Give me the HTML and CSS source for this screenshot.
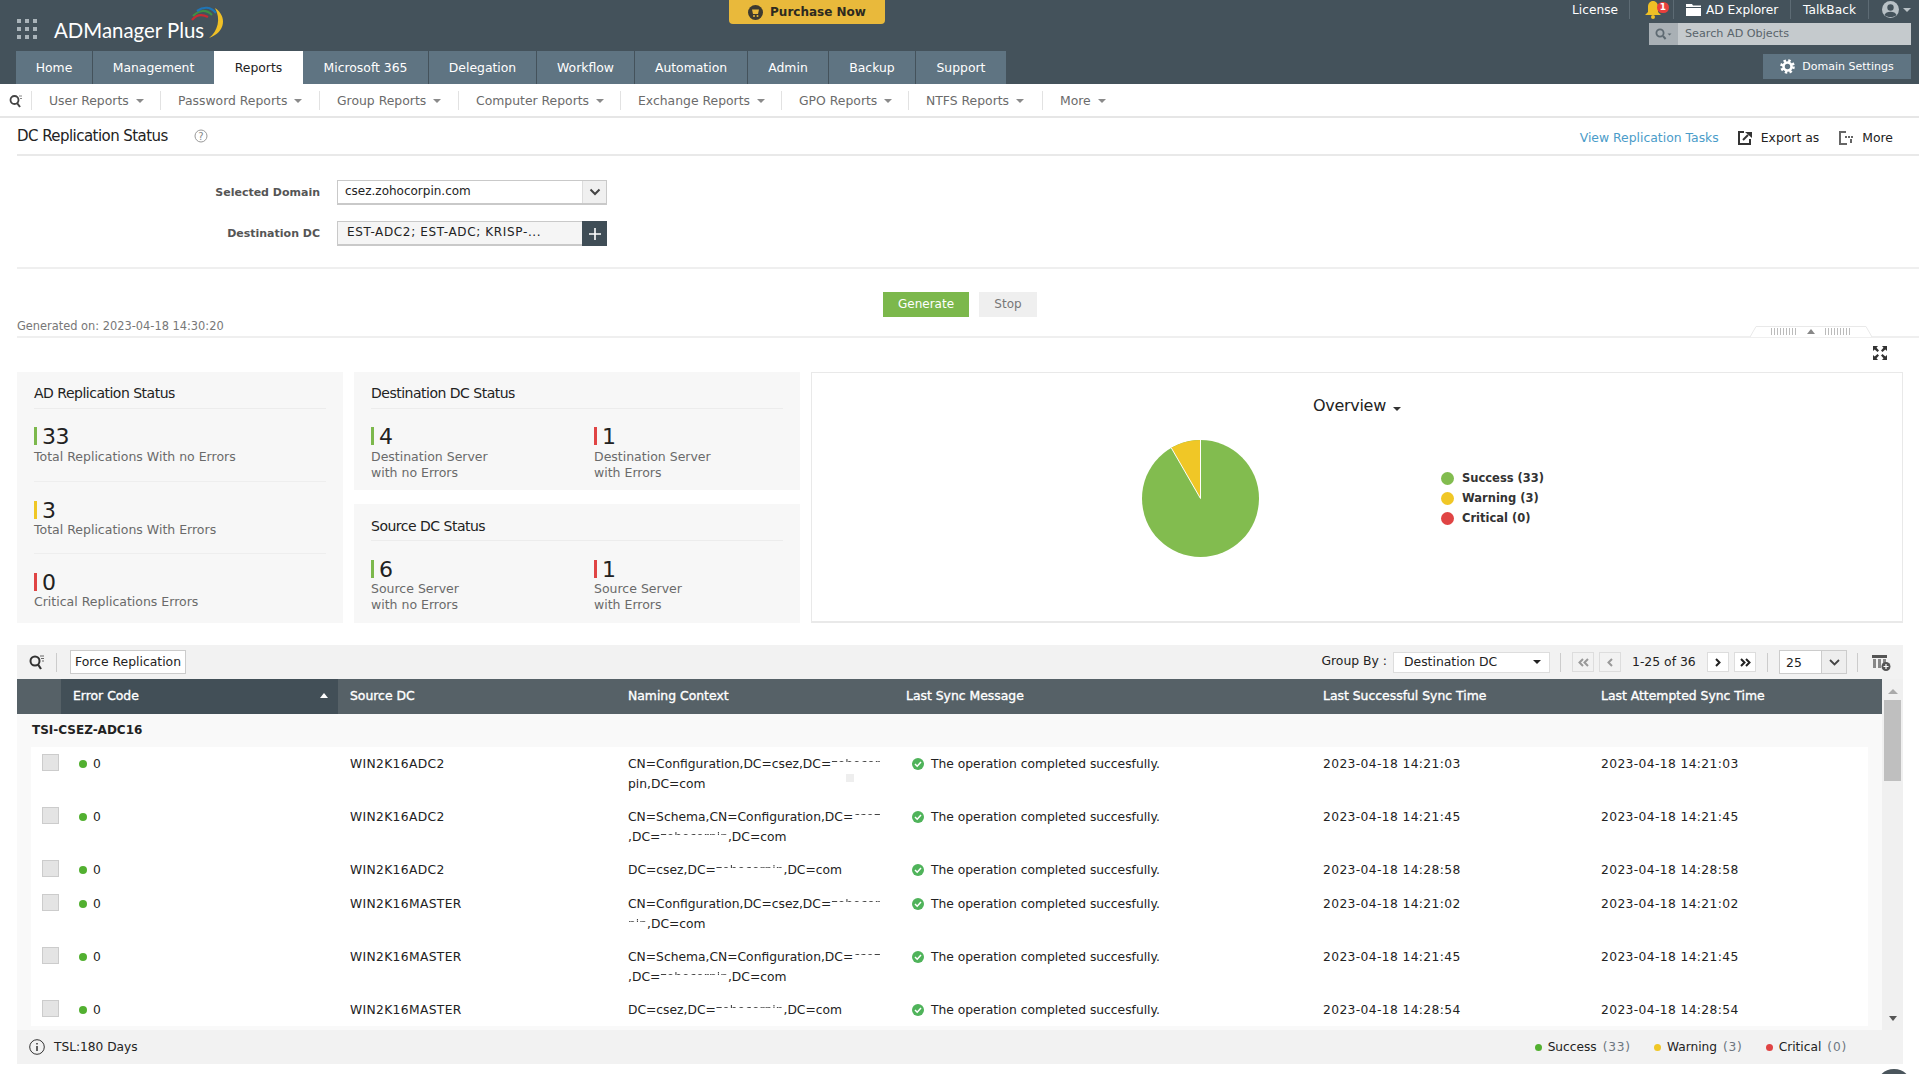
FILE: index.html
```html
<!DOCTYPE html>
<html lang="en">
<head>
<meta charset="utf-8">
<title>DC Replication Status - ADManager Plus</title>
<link rel="stylesheet" href="styles.css">
</head>
<body>
<header class="hdr">
  <div class="hdr-top">
    <div class="brand">
      <svg class="apps" width="20" height="20" viewBox="0 0 20 20"><g fill="#aab4ba"><rect x="0" y="0" width="4" height="4"/><rect x="8" y="0" width="4" height="4"/><rect x="16" y="0" width="4" height="4"/><rect x="0" y="8" width="4" height="4"/><rect x="8" y="8" width="4" height="4"/><rect x="16" y="8" width="4" height="4"/><rect x="0" y="16" width="4" height="4"/><rect x="8" y="16" width="4" height="4"/><rect x="16" y="16" width="4" height="4"/></g></svg>
      <span class="logo-text">ADManager Plus</span>
      <svg class="logo-arc" width="36" height="36" viewBox="0 0 36 36" fill="none"><path d="M1 15C5 10 11 9 17 12" stroke="#c62b33" stroke-width="2.200"/><path d="M2 11C8 5 15 4 21 10" stroke="#3f8f45" stroke-width="2.200"/><path d="M6 6C13 1 20 2 25 8" stroke="#1f74b5" stroke-width="2.200"/><path d="M24 3C36 11 35 27 18 33C27 26 30 14 24 3Z" fill="#f0c026"/></svg>
    </div>
    <a class="purchase"><svg width="15" height="15" viewBox="0 0 15 15"><circle cx="7.500" cy="7.500" r="7.500" fill="#3d3a30"/><path d="M4 4.500h7l-1 4.500H5z" fill="#e9b93b"/><circle cx="6" cy="11" r="1" fill="#e9b93b"/><circle cx="9.500" cy="11" r="1" fill="#e9b93b"/></svg>Purchase Now</a>
    <div class="hdr-right">
      <div class="toplinks">
        <span class="tl tl-license">License</span>
        <span class="tl tl-bell"><svg width="16" height="18" viewBox="0 0 16 18"><path d="M8 0c3 0 5 2.500 5 6v5l3 3H0l3-3V6c0-3.500 2-6 5-6z" fill="#f0c026"/><circle cx="8" cy="16" r="2" fill="#f0c026"/></svg><span class="badge">1</span></span>
        <span class="tl tl-ad"><svg width="15" height="12" viewBox="0 0 15 12"><path d="M0 0h6l1 1.500h8V3H0zM0 4h15v8H0z" fill="#fff"/></svg>AD Explorer</span>
        <span class="tl tl-talk">TalkBack</span>
        <span class="tl tl-user"><svg width="17" height="17" viewBox="0 0 17 17"><circle cx="8.500" cy="8.500" r="8.500" fill="#b9c1c6"/><circle cx="8.500" cy="6.500" r="3.200" fill="#44525b"/><path d="M2.500 14c1-4.500 11-4.500 12 0-3 2.800-9 2.800-12 0z" fill="#44525b"/></svg><i class="tri tri-grey"></i></span>
      </div>
      <div class="hsearch">
        <span class="hsearch-ico"><svg width="18" height="12" viewBox="0 0 18 12" fill="none"><circle cx="5" cy="5" r="3.600" stroke="#5e6a72" stroke-width="1.800"/><path d="M8 8l2.600 3" stroke="#5e6a72" stroke-width="2"/><path d="M12.500 5.500h4l-2 2z" fill="#5e6a72"/></svg></span>
        <span class="hsearch-text">Search AD Objects</span>
      </div>
    </div>
  </div>
  <div class="hdr-nav">
    <nav class="tabs">
      <a class="tab w-home">Home</a><a class="tab w-mgmt">Management</a><a class="tab tab-on w-rep">Reports</a><a class="tab w-ms">Microsoft 365</a><a class="tab w-del">Delegation</a><a class="tab w-wf">Workflow</a><a class="tab w-auto">Automation</a><a class="tab w-adm">Admin</a><a class="tab w-bak">Backup</a><a class="tab w-sup">Support</a>
    </nav>
    <a class="domset"><svg width="15" height="15" viewBox="0 0 15 15" fill="none"><circle cx="7.500" cy="7.500" r="5.700" stroke="#fff" stroke-width="3.200" stroke-dasharray="2.300 2.180"/><circle cx="7.500" cy="7.500" r="4" stroke="#fff" stroke-width="2.600"/></svg>Domain Settings</a>
  </div>
</header>

<div class="subnav">
  <span class="sn-search"><svg width="14" height="14" viewBox="0 0 14 14" fill="none"><circle cx="5.500" cy="6" r="4" stroke="#444" stroke-width="1.800"/><path d="M8 9l3 4" stroke="#444" stroke-width="2"/><path d="M10 2h3M11 4.500h2" stroke="#888"/></svg></span>
  <a class="sn sn1">User Reports<i class="tri"></i></a>
  <a class="sn sn2">Password Reports<i class="tri"></i></a>
  <a class="sn sn3">Group Reports<i class="tri"></i></a>
  <a class="sn sn4">Computer Reports<i class="tri"></i></a>
  <a class="sn sn5">Exchange Reports<i class="tri"></i></a>
  <a class="sn sn6">GPO Reports<i class="tri"></i></a>
  <a class="sn sn7">NTFS Reports<i class="tri"></i></a>
  <a class="sn sn8">More<i class="tri"></i></a>
</div>

<main class="page">
  <div class="titlebar">
    <h1 class="title">DC Replication Status</h1>
    <svg class="help" width="14" height="14" viewBox="0 0 14 14"><circle cx="7" cy="7" r="6" fill="none" stroke="#999"/><text x="7" y="10.500" text-anchor="middle" class="help-q">?</text></svg>
    <a class="viewtasks">View Replication Tasks</a>
    <a class="act act-exp"><svg width="14" height="15" viewBox="0 0 14 15" fill="none"><path d="M6 2H1v12h11V9" stroke="#333" stroke-width="2"/><path d="M5 10l5-5" stroke="#333" stroke-width="2"/><path d="M7 2h7v6z" fill="#333"/></svg>Export as</a>
    <a class="act act-more"><svg width="14" height="15" viewBox="0 0 14 15" fill="none"><path d="M7 2H1v12h7" stroke="#666" stroke-width="2"/><path d="M6 7h2M9 7h2M12 7h2M12 9v4" stroke="#333" stroke-width="1.500"/></svg>More</a>
  </div>

  <form class="filters">
    <div class="frow">
      <label class="flabel">Selected Domain</label>
      <div class="fctl"><span class="fval">csez.zohocorpin.com</span><span class="fbtn"><svg width="12" height="8" viewBox="0 0 12 8" fill="none"><path d="M1.500 1.500L6 6l4.500-4.500" stroke="#444" stroke-width="2"/></svg></span></div>
    </div>
    <div class="frow frow2">
      <label class="flabel">Destination DC</label>
      <div class="fctl fctl-grey"><span class="fval fval2">EST-ADC2; EST-ADC; KRISP-...</span><span class="fbtn fbtn-dark"><svg width="12" height="12" viewBox="0 0 12 12"><path d="M6 0v12M0 6h12" stroke="#fff" stroke-width="1.600"/></svg></span></div>
    </div>
  </form>

  <div class="actions">
    <a class="btn btn-go">Generate</a>
    <a class="btn btn-stop">Stop</a>
  </div>

  <div class="genline">
    <span class="gen">Generated on: 2023-04-18 14:30:20</span>
    <span class="collapse"><svg class="collapse-bg" width="122" height="11" viewBox="0 0 122 11" fill="#fff"><path d="M0 11L6 .5H116L122 11" stroke="#e9e9e9"/></svg><i class="dots"></i><i class="tri-up"></i><i class="dots"></i></span>
  </div>

  <div class="expand-row"><svg width="14" height="14" viewBox="0 0 14 14"><path d="M0 0h5L3.500 1.700 6 4.500 4.500 6 1.700 3.500 0 5zM14 0v5l-1.700-1.500L9.500 6 8 4.500l2.500-2.800L9 0zM0 14V9l1.700 1.500L4.500 8 6 9.500l-2.500 2.800L5 14zM14 14H9l1.500-1.700L8 9.500 9.500 8l2.800 2.500L14 9z" fill="#333"/></svg></div>

  <section class="stats">
    <div class="card card-ad">
      <h2 class="card-h">AD Replication Status</h2>
      <div class="stat stat-block"><div class="num"><i class="bar g"></i>33</div><div class="cap">Total Replications With no Errors</div></div>
      <div class="stat stat-block ruled"><div class="num"><i class="bar y"></i>3</div><div class="cap">Total Replications With Errors</div></div>
      <div class="stat stat-block ruled"><div class="num"><i class="bar r"></i>0</div><div class="cap">Critical Replications Errors</div></div>
    </div>
    <div class="mid">
      <div class="card card-dc">
        <h2 class="card-h">Destination DC Status</h2>
        <div class="pair">
          <div class="stat"><div class="num"><i class="bar g"></i>4</div><div class="cap">Destination Server<br>with no Errors</div></div>
          <div class="stat"><div class="num"><i class="bar r"></i>1</div><div class="cap">Destination Server<br>with Errors</div></div>
        </div>
      </div>
      <div class="card card-dc card-src">
        <h2 class="card-h">Source DC Status</h2>
        <div class="pair">
          <div class="stat"><div class="num"><i class="bar g"></i>6</div><div class="cap">Source Server<br>with no Errors</div></div>
          <div class="stat"><div class="num"><i class="bar r"></i>1</div><div class="cap">Source Server<br>with Errors</div></div>
        </div>
      </div>
    </div>
    <div class="chart">
      <div class="chart-title">Overview<i class="tri tri-dark"></i></div>
      <div class="chart-body">
        <svg class="pie" width="117" height="117" viewBox="-59 -59 118 118"><circle r="59" fill="#82bc4f"/><path d="M0 0L0-59A59 59 0 0 0-29.500-51.100Z" fill="#f0c726"/><path d="M0 0L0-59M0 0L-29.500-51.100" stroke="#fff" stroke-width="1"/></svg>
        <ul class="legend">
          <li><i class="ldot"></i>Success (33)</li>
          <li><i class="ldot ldot-y"></i>Warning (3)</li>
          <li><i class="ldot ldot-r"></i>Critical (0)</li>
        </ul>
      </div>
    </div>
  </section>

  <section class="gridwrap">
    <div class="toolbar">
      <span class="tb-search"><svg width="16" height="16" viewBox="0 0 16 16" fill="none"><circle cx="6" cy="7" r="4.500" stroke="#333" stroke-width="2"/><path d="M9 10.500l3 4.500" stroke="#333" stroke-width="2.200"/><path d="M11 2h4M12 4.500h3M13 7h2" stroke="#666"/></svg></span>
      <span class="tb-sep"></span>
      <a class="force">Force Replication</a>
      <span class="tb-right">
        <span class="gb-label">Group By :</span>
        <span class="gb-sel"><span>Destination DC</span><i class="tri tri-black"></i></span>
        <span class="tb-sep tb-sep2"></span>
        <a class="pg pg-off"><svg width="11" height="9" viewBox="0 0 11 9" fill="none" stroke="#999" stroke-width="2"><path d="M5 1L1.500 4.500 5 8M10 1L6.500 4.500 10 8"/></svg></a>
        <a class="pg pg-off"><svg width="6" height="9" viewBox="0 0 6 9" fill="none" stroke="#999" stroke-width="2"><path d="M5 1L1.500 4.500 5 8"/></svg></a>
        <span class="pg-text">1-25 of 36</span>
        <a class="pg"><svg width="6" height="9" viewBox="0 0 6 9" fill="none" stroke="#222" stroke-width="2"><path d="M1 1l3.500 3.500L1 8"/></svg></a>
        <a class="pg"><svg width="11" height="9" viewBox="0 0 11 9" fill="none" stroke="#222" stroke-width="2"><path d="M1 1l3.500 3.500L1 8M6 1l3.500 3.500L6 8"/></svg></a>
        <span class="tb-sep tb-sep3"></span>
        <span class="size"><span class="size-v">25</span><span class="size-b"><svg width="11" height="7" viewBox="0 0 11 7" fill="none"><path d="M1 1l4.500 4.500L10 1" stroke="#444" stroke-width="1.800"/></svg></span></span>
        <span class="tb-sep tb-sep4"></span>
        <svg class="colsel" width="19" height="17" viewBox="0 0 19 17"><path d="M0 1h15v3H0z" fill="#555"/><path d="M1 5h3v9H1zM6 5h3v9H6zM11 5h3v6h-3z" fill="#888"/><circle cx="14" cy="12.500" r="4.500" fill="#555"/><path d="M14 10v5M11.500 12.500h5" stroke="#fff" stroke-width="1.200"/></svg>
      </span>
    </div>
    <div class="gridbody">
      <div class="gridmain">
        <div class="thead">
          <span></span>
          <span class="th th-sort">Error Code<i class="tri-up tri-up-w"></i></span>
          <span class="th th-dc">Source DC</span>
          <span class="th">Naming Context</span>
          <span class="th">Last Sync Message</span>
          <span class="th">Last Successful Sync Time</span>
          <span class="th">Last Attempted Sync Time</span>
        </div>
        <div class="group">TSI-CSEZ-ADC16</div>
        <div class="rows">
          <div class="row row-2">
            <span class="cb"></span><span class="code"><i class="okdot"></i>0</span><span class="dc">WIN2K16ADC2</span>
            <span class="nc">CN=Configuration,DC=csez,DC=<b class="red">zohocor</b><br>pin,DC=com<i class="smudge"></i></span>
            <span class="msg"><svg class="ok" width="12" height="12" viewBox="0 0 12 12"><circle cx="6" cy="6" r="6" fill="#4fb35a"/><path d="M3 6l2.200 2.200L9 4" stroke="#fff" stroke-width="1.500" fill="none"/></svg>The operation completed succesfully.</span>
            <span class="ts">2023-04-18 14:21:03</span><span class="ts">2023-04-18 14:21:03</span>
          </div>
          <div class="row row-2">
            <span class="cb"></span><span class="code"><i class="okdot"></i>0</span><span class="dc">WIN2K16ADC2</span>
            <span class="nc">CN=Schema,CN=Configuration,DC=<b class="red">csez</b><br>,DC=<b class="red">zohocorpin</b>,DC=com</span>
            <span class="msg"><svg class="ok" width="12" height="12" viewBox="0 0 12 12"><circle cx="6" cy="6" r="6" fill="#4fb35a"/><path d="M3 6l2.200 2.200L9 4" stroke="#fff" stroke-width="1.500" fill="none"/></svg>The operation completed succesfully.</span>
            <span class="ts">2023-04-18 14:21:45</span><span class="ts">2023-04-18 14:21:45</span>
          </div>
          <div class="row row-1">
            <span class="cb"></span><span class="code"><i class="okdot"></i>0</span><span class="dc">WIN2K16ADC2</span>
            <span class="nc">DC=csez,DC=<b class="red">zohocorpin</b>,DC=com</span>
            <span class="msg"><svg class="ok" width="12" height="12" viewBox="0 0 12 12"><circle cx="6" cy="6" r="6" fill="#4fb35a"/><path d="M3 6l2.200 2.200L9 4" stroke="#fff" stroke-width="1.500" fill="none"/></svg>The operation completed succesfully.</span>
            <span class="ts">2023-04-18 14:28:58</span><span class="ts">2023-04-18 14:28:58</span>
          </div>
          <div class="row row-2">
            <span class="cb"></span><span class="code"><i class="okdot"></i>0</span><span class="dc">WIN2K16MASTER</span>
            <span class="nc">CN=Configuration,DC=csez,DC=<b class="red">zohocor</b><br><b class="red">pin</b>,DC=com</span>
            <span class="msg"><svg class="ok" width="12" height="12" viewBox="0 0 12 12"><circle cx="6" cy="6" r="6" fill="#4fb35a"/><path d="M3 6l2.200 2.200L9 4" stroke="#fff" stroke-width="1.500" fill="none"/></svg>The operation completed succesfully.</span>
            <span class="ts">2023-04-18 14:21:02</span><span class="ts">2023-04-18 14:21:02</span>
          </div>
          <div class="row row-2">
            <span class="cb"></span><span class="code"><i class="okdot"></i>0</span><span class="dc">WIN2K16MASTER</span>
            <span class="nc">CN=Schema,CN=Configuration,DC=<b class="red">csez</b><br>,DC=<b class="red">zohocorpin</b>,DC=com</span>
            <span class="msg"><svg class="ok" width="12" height="12" viewBox="0 0 12 12"><circle cx="6" cy="6" r="6" fill="#4fb35a"/><path d="M3 6l2.200 2.200L9 4" stroke="#fff" stroke-width="1.500" fill="none"/></svg>The operation completed succesfully.</span>
            <span class="ts">2023-04-18 14:21:45</span><span class="ts">2023-04-18 14:21:45</span>
          </div>
          <div class="row row-1">
            <span class="cb"></span><span class="code"><i class="okdot"></i>0</span><span class="dc">WIN2K16MASTER</span>
            <span class="nc">DC=csez,DC=<b class="red">zohocorpin</b>,DC=com</span>
            <span class="msg"><svg class="ok" width="12" height="12" viewBox="0 0 12 12"><circle cx="6" cy="6" r="6" fill="#4fb35a"/><path d="M3 6l2.200 2.200L9 4" stroke="#fff" stroke-width="1.500" fill="none"/></svg>The operation completed succesfully.</span>
            <span class="ts">2023-04-18 14:28:54</span><span class="ts">2023-04-18 14:28:54</span>
          </div>
        </div>
      </div>
      <div class="scroll">
        <i class="sb-up"></i>
        <i class="sb-thumb"></i>
        <i class="sb-down"></i>
      </div>
    </div>
    <div class="gridfoot">
      <svg class="info" width="16" height="16" viewBox="0 0 16 16"><circle cx="8" cy="8" r="7.300" fill="none" stroke="#333"/><path d="M8 7v5M8 4v1.600" stroke="#333" stroke-width="1.500"/></svg>
      <span>TSL:180 Days</span>
      <span class="fleg"><i class="fd fd-g"></i>Success <em>(33)</em></span>
      <span class="fleg fleg2"><i class="fd fd-y"></i>Warning <em>(3)</em></span>
      <span class="fleg fleg3"><i class="fd fd-r"></i>Critical <em>(0)</em></span>
    </div>
  </section>
</main>
<span class="chatbub"></span>
</body>
</html>
```
FILE: styles.css
```css
* { box-sizing: border-box; }
html, body { margin: 0; padding: 0; }
body { width: 1919px; height: 1074px; overflow: hidden; background: #fff; font-family: "DejaVu Sans", Verdana, sans-serif; font-size: 12.400px; color: #222; position: relative; }
a { color: inherit; text-decoration: none; }
i, em { font-style: normal; }

.hdr { height: 84px; background: #44525b; }
.hdr-top { height: 51px; display: flex; align-items: flex-start; }
.brand { width: 729px; height: 51px; display: flex; align-items: flex-start; padding: 19px 0 0 17px; position: relative; }
.logo-text { margin-left: 17px; margin-top: -1px; font-family: Lato, sans-serif; font-size: 20.400px; color: #fff; white-space: nowrap; }
.logo-arc { position: absolute; left: 191px; top: 5px; }
.purchase { width: 156px; height: 24px; background: #e9b93b; border-radius: 0 0 4px 4px; display: flex; align-items: center; justify-content: center; gap: 7px; font-weight: bold; font-size: 12px; color: #2d2a20; }
.hdr-right { margin-left: auto; display: flex; flex-direction: column; align-items: flex-end; padding-right: 8px; }
.toplinks { height: 23px; display: flex; align-items: flex-start; color: #fff; font-size: 12.200px; }
.tl { height: 19px; display: flex; align-items: center; border-right: 1px solid #5d6b74; white-space: nowrap; position: relative; }
.tl-license { padding-right: 11px; }
.tl-bell { width: 44px; padding-left: 15px; }
.tl-ad { width: 117px; padding-left: 12px; gap: 5px; }
.tl-talk { width: 78px; justify-content: center; }
.tl-user { width: 42px; padding-left: 13px; border-right: 0; gap: 4px; }
.badge { position: absolute; left: 27px; top: 2px; width: 12px; height: 11px; border-radius: 6px; background: #e8403d; color: #fff; font-size: 9px; font-weight: bold; line-height: 11px; text-align: center; }
.hsearch { width: 262px; height: 22px; background: #c5cacd; display: flex; }
.hsearch-ico { width: 29px; background: #a9b0b5; display: flex; align-items: center; justify-content: center; }
.hsearch-text { padding-left: 7px; line-height: 22px; font-size: 11.200px; color: #59646b; }

.hdr-nav { height: 33px; display: flex; justify-content: space-between; padding: 0 8px 0 16px; }
.tabs { display: flex; gap: 1px; }
.tab { height: 33px; line-height: 34px; background: #5f7482; color: #fff; text-align: center; white-space: nowrap; }
.tab-on { background: #fff; color: #222; margin: 0 -1px; }
.w-home { width: 76px; } .w-mgmt { width: 121px; } .w-rep { width: 89px; } .w-ms { width: 125px; } .w-del { width: 107px; } .w-wf { width: 97px; } .w-auto { width: 112px; } .w-adm { width: 80px; } .w-bak { width: 86px; } .w-sup { width: 90px; }
.domset { width: 148px; height: 25px; margin-top: 3px; background: #5f7482; color: #fff; font-size: 11px; display: flex; align-items: center; justify-content: center; gap: 7px; white-space: nowrap; }

.subnav { height: 34px; border-bottom: 2px solid #e6e6e6; display: flex; align-items: center; color: #6b6b6b; padding-top: 1px; }
.sn-search { width: 31px; padding-left: 9px; display: flex; }
.sn { height: 19px; border-left: 1px solid #e2e2e2; display: flex; align-items: center; padding-left: 17px; white-space: nowrap; }
.sn1 { width: 129px; } .sn2 { width: 159px; } .sn3 { width: 139px; } .sn4 { width: 162px; } .sn5 { width: 161px; } .sn6 { width: 127px; } .sn7 { width: 134px; } .sn8 { width: 80px; }
.tri { display: inline-block; width: 0; height: 0; margin-left: 7px; border-left: 4px solid transparent; border-right: 4px solid transparent; border-top: 4px solid #8a8a8a; }
.tri-grey { border-top-color: #b9c1c6; margin-left: 0; }
.tri-dark { border-top-color: #333; }
.tri-black { border-top-color: #222; margin-left: auto; }

.titlebar { height: 38px; margin: 0 0 0 17px; border-bottom: 2px solid #e9e9e9; display: flex; align-items: center; padding-right: 26px; }
.title { margin: 0; font-size: 15px; font-weight: normal; color: #222; letter-spacing: -0.55px; }
.help { margin-left: 26px; }
.help-q { font-size: 10px; fill: #888; }
.viewtasks { margin-left: auto; padding-top: 2px; color: #4a9cc9; }
.act { display: flex; align-items: center; gap: 9px; padding-top: 2px; }
.act-exp { margin-left: 19px; }
.act-more { margin-left: 20px; }

.filters { margin-left: 17px; height: 113px; border-bottom: 2px solid #efefef; padding-top: 24px; }
.frow { display: flex; align-items: center; height: 25px; }
.frow2 { margin-top: 16px; }
.flabel { width: 320px; padding-right: 17px; text-align: right; font-weight: bold; font-size: 11px; color: #555; }
.fctl { width: 270px; height: 25px; border: 1px solid #c9c9c9; border-bottom-width: 2px; display: flex; justify-content: space-between; background: #fff; font-size: 12px; }
.fctl-grey { background: #f5f5f5; }
.fval { padding-left: 7px; line-height: 21px; }
.fval2 { padding-left: 9px; letter-spacing: .65px; }
.fbtn { width: 24px; background: #f0f0f0; border-left: 1px solid #ddd; display: flex; align-items: center; justify-content: center; }
.fbtn-dark { background: #3f4d56; margin: -1px -1px -2px 0; width: 25px; border: 0; }

.actions { height: 55px; padding: 23px 0 0 883px; display: flex; gap: 10px; }
.btn { height: 25px; line-height: 25px; text-align: center; font-size: 12px; }
.btn-go { width: 86px; background: #7cb84c; color: #fff; }
.btn-stop { width: 58px; background: #efefef; color: #777; }

.genline { height: 14px; margin-left: 17px; border-bottom: 2px solid #efefef; position: relative; }
.gen { position: absolute; left: 0; top: -5px; font-size: 11.400px; color: #777; }
.collapse { position: absolute; right: 47px; top: 2px; height: 11px; width: 122px; display: flex; align-items: center; justify-content: center; gap: 10px; }
.collapse-bg { position: absolute; left: 0; top: 0; }
.dots { position: relative; width: 26px; height: 7px; background: repeating-linear-gradient(90deg, #bbb 0 1px, transparent 1px 3px); }
.tri-up { position: relative; width: 0; height: 0; border-left: 4px solid transparent; border-right: 4px solid transparent; border-bottom: 5px solid #888; }
.tri-up-w { border-bottom-color: #fff; margin-left: auto; margin-right: 10px; }

.expand-row { height: 34px; padding: 8px 0 0 1873px; }

.stats { display: flex; margin-left: 17px; height: 251px; }
.card { background: #f7f7f7; padding: 0 17px; }
.card-ad { width: 326px; }
.mid { width: 446px; margin-left: 11px; display: flex; flex-direction: column; gap: 14px; }
.card-dc { height: 118px; }
.card-src { height: 119px; }
.card-h { margin: 0; height: 37px; border-bottom: 1px solid #ececec; padding-top: 13px; font-size: 14px; font-weight: normal; letter-spacing: -0.5px; color: #222; white-space: nowrap; }
.card-src .card-h { padding-top: 14px; }
.stat-block { height: 72px; padding-top: 17px; }
.stat-block.ruled { border-top: 1px solid #eee; padding-top: 18px; }
.ruled .cap { margin-top: 2px; }
.pair { display: flex; padding-top: 17px; }
.card-src .pair { padding-top: 18px; }
.card-src .cap { margin-top: 2px; }
.pair .stat { width: 223px; }
.pair .stat + .stat { width: auto; }
.num { display: flex; align-items: center; height: 20px; font-size: 22px; letter-spacing: -0.500px; color: #222; }
.bar { width: 3px; height: 18px; margin-right: 5px; }
.bar.g { background: #7cb84c; } .bar.y { background: #f0c726; } .bar.r { background: #e04444; }
.cap { margin-top: 3px; line-height: 16px; color: #6a6a6a; font-size: 12.500px; white-space: nowrap; }

.chart { margin-left: 11px; width: 1092px; border: 1px solid #e9e9e9; border-bottom-width: 2px; }
.chart-title { padding: 23px 0 0 501px; font-size: 16px; height: 67px; letter-spacing: -0.300px; }
.chart-body { display: flex; }
.pie { margin: 0 0 0 330px; }
.legend { list-style: none; margin: 28px 0 0 0; padding: 0 0 0 182px; font-weight: bold; font-size: 11.500px; color: #333; }
.legend li { height: 20px; display: flex; align-items: center; gap: 8px; }
.ldot { width: 13px; height: 13px; border-radius: 50%; background: #82bc4f; }
.ldot-y { background: #f0c726; } .ldot-r { background: #e04444; }

.gridwrap { margin: 22px 0 0 17px; width: 1886px; }
.toolbar { height: 34px; background: #f2f2f2; display: flex; align-items: center; padding-left: 12px; }
.tb-search { display: flex; }
.tb-sep { width: 1px; height: 19px; background: #ccc; margin: 0 13px 0 11px; }
.force { height: 24px; line-height: 22px; padding: 0 4px; background: #fff; border: 1px solid #ccc; }
.tb-right { margin-left: auto; display: flex; align-items: center; padding-right: 12px; font-size: 12.400px; }
.gb-label { margin-right: 6px; padding-bottom: 3px; }
.gb-sel { width: 157px; height: 21px; background: #fff; border: 1px solid #ddd; display: flex; align-items: center; padding: 0 8px 1px 10px; }
.tb-sep2 { margin: 0 11px 0 10px; }
.tb-sep3 { margin: 0 11px 0 6px; }
.tb-sep4 { margin: 0 14px 0 10px; }
.pg { width: 22px; height: 20px; border: 1px solid #ddd; background: #fff; margin-right: 5px; display: flex; align-items: center; justify-content: center; }
.pg-off { background: #f2f2f2; }
.pg-text { width: 81px; padding: 0 0 2px 6px; white-space: nowrap; }
.size { width: 68px; height: 24px; border: 1px solid #ccc; background: #fff; display: flex; }
.size-v { flex: 1; padding-left: 6px; line-height: 24px; }
.size-b { width: 25px; background: #eee; border-left: 1px solid #ccc; display: flex; align-items: center; justify-content: center; }

.gridbody { height: 351px; display: flex; overflow: hidden; }
.gridmain { width: 1865px; background: #f9f9f9; }
.thead { height: 35px; background: #566167; color: #fff; display: grid; grid-template-columns: 44px 277px 279px 278px 417px 278px 1fr; font-size: 12.400px; -webkit-text-stroke: .35px #fff; }
.th { padding: 0 0 3px 11px; display: flex; align-items: center; white-space: nowrap; }
.th-sort { background: #424f57; padding-left: 12px; }
.th-dc { padding-left: 12px; }
.group { height: 33px; padding-left: 15px; line-height: 33px; font-weight: bold; font-size: 12px; color: #222; }
.rows { margin-left: 14px; width: 1837px; background: #fff; }
.row { display: grid; grid-template-columns: 30px 277px 279px 278px 417px 278px 1fr; padding-top: 7px; line-height: 20px; white-space: nowrap; font-size: 12.300px; }
.row > span { padding-left: 11px; }
.row-2 { height: 53px; }
.row-1 { height: 33.500px; }
.row .cb { display: block; width: 17px; height: 17px; margin: 0 0 0 11px; padding: 0; background: #e4e4e4; border: 1px solid #ccc; }
.row .code { padding-left: 18px; display: flex; align-items: flex-start; }
.okdot { width: 8px; height: 8px; margin: 6px 6px 0 0; border-radius: 50%; background: #52b030; }
.row .dc { padding-left: 12px; letter-spacing: .35px; }
.row .nc { position: relative; }
.smudge { position: absolute; left: 229px; top: 20px; width: 8px; height: 8px; background: #eee; }
.row .msg { padding-left: 17px; display: flex; align-items: flex-start; }
.ok { margin: 4px 7px 0 0; flex: none; }
.row .ts { letter-spacing: .37px; }
.red { font-weight: normal; color: transparent; background: linear-gradient(#444 0 38%, #fff 38% 100%); -webkit-background-clip: text; background-clip: text; }

.scroll { width: 21px; background: #f0f0f0; display: flex; flex-direction: column; align-items: center; }
.sb-up { margin-top: 10px; width: 0; height: 0; border-left: 5px solid transparent; border-right: 5px solid transparent; border-bottom: 5px solid #aaa; }
.sb-thumb { margin-top: 6px; width: 17px; height: 81px; background: #bfbfbf; }
.sb-down { margin-top: auto; margin-bottom: 9px; width: 0; height: 0; border-left: 4px solid transparent; border-right: 4px solid transparent; border-top: 5px solid #555; }

.gridfoot { height: 34px; background: #f2f2f2; display: flex; align-items: center; padding-left: 12px; gap: 9px; font-size: 12.200px; }
.fleg { display: flex; align-items: center; gap: 6px; margin-left: auto; }
.fleg2, .fleg3 { margin-left: 14px; }
.fleg3 { margin-right: 56px; }
.fleg em { color: #6d7680; letter-spacing: .8px; }
.fd { width: 7px; height: 7px; border-radius: 50%; }
.fd-g { background: #52b030; } .fd-y { background: #f0c726; } .fd-r { background: #e04444; }
.chatbub { position: absolute; left: 1876px; top: 1069px; width: 36px; height: 36px; border-radius: 50%; background: #4a555c; }
```
